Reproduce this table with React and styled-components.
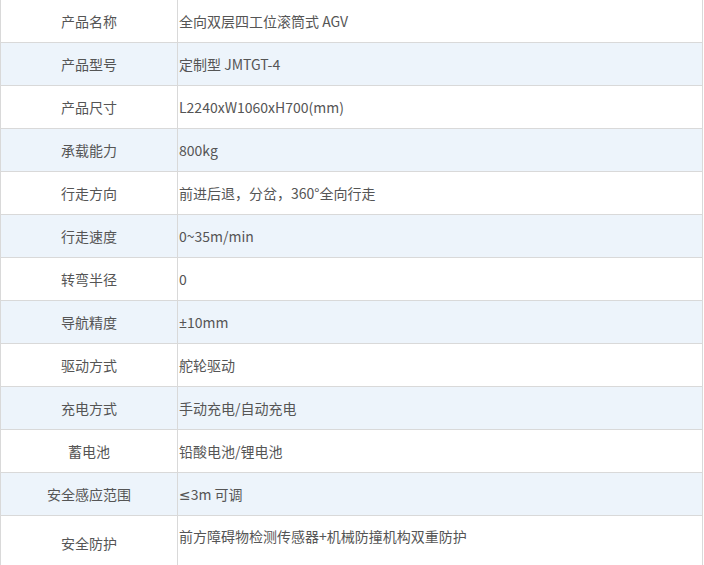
import React from "react";
import styled, { createGlobalStyle } from "styled-components";

const GlobalStyle = createGlobalStyle`
  body {
    margin: 0;
    background: #fff;
    font-family: "Noto Sans CJK SC", "Noto Sans", sans-serif;
  }
`;

const specs = [
  ["产品名称", "全向双层四工位滚筒式 AGV"],
  ["产品型号", "定制型 JMTGT-4"],
  ["产品尺寸", "L2240xW1060xH700(mm)"],
  ["承载能力", "800kg"],
  ["行走方向", "前进后退，分岔，360°全向行走"],
  ["行走速度", "0~35m/min"],
  ["转弯半径", "0"],
  ["导航精度", "±10mm"],
  ["驱动方式", "舵轮驱动"],
  ["充电方式", "手动充电/自动充电"],
  ["蓄电池", "铅酸电池/锂电池"],
  ["安全感应范围", "≤3m 可调"],
  ["安全防护", "前方障碍物检测传感器+机械防撞机构双重防护"],
];

// CJK fonts draw ± and ≤ full width; the page shows the narrow Latin forms
const withSymbols = (text) =>
  text.split(/([±≤])/).map((part, i) =>
    /^[±≤]$/.test(part) ? <Sym key={i}>{part}</Sym> : part
  );

const App = () => {
  return (
    <>
      <GlobalStyle />
      <SpecTable>
        <tbody>
          {specs.map(([label, value], i) => {
            const last = i === specs.length - 1;
            return (
              <Row key={label} $alt={i % 2 === 1} $first={i === 0} $tall={last}>
                <LabelCell>{label}</LabelCell>
                <ValueCell $raised={last}>{withSymbols(value)}</ValueCell>
              </Row>
            );
          })}
        </tbody>
      </SpecTable>
    </>
  );
};

export default App;

const SpecTable = styled.table`
  width: 703px;
  border-collapse: collapse;
  table-layout: fixed;
  border-left: 1px solid #d9d9d9;
  border-right: 1px solid #d9d9d9;
  font-size: 14px;
  color: #555;
`;

const Row = styled.tr`
  height: ${(p) => (p.$tall ? "56px" : p.$first ? "42px" : "43px")};
  background: ${(p) => (p.$alt ? "#edf4fb" : "#fff")};
  border-bottom: 1px solid #d9d9d9;
`;

const LabelCell = styled.td`
  width: 176px;
  padding: 0;
  text-align: center;
  vertical-align: middle;
  border-right: 1px solid #d9d9d9;
`;

const ValueCell = styled.td`
  padding: 0 0 ${(p) => (p.$raised ? "14px" : "0")} 1px;
  text-align: left;
  vertical-align: middle;
`;

const Sym = styled.span`
  font-family: "Noto Sans", "DejaVu Sans", sans-serif;
`;
